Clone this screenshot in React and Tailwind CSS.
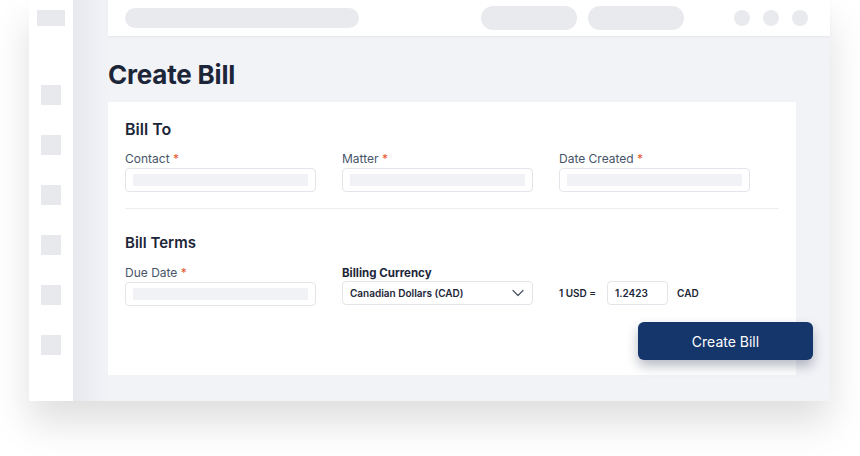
import React from "react";

const Field = ({ label }) => (
    <div className="w-[191px]">
        <div className="text-[12px] leading-[16px] text-[#475569] mb-[1px]">
            {label} <span className="text-[#e4572e]">*</span>
        </div>
        <div className="h-[24px] rounded-[4px] border border-[#e3e5ea] bg-white px-[7px] flex items-center">
            <div className="h-[12px] w-full bg-[#f1f2f5]" />
        </div>
    </div>
);

const App = () => {
    return (
        <div className="w-[860px] h-[456px] bg-white relative overflow-hidden" style={{ fontFamily: "Inter, 'Noto Sans', sans-serif" }}>
            <div className="absolute left-[29px] top-0 w-[801px] h-[401px] flex shadow-[0_22px_36px_rgba(0,0,0,0.13)]">
                {/* sidebar */}
                <div className="w-[44px] bg-white flex flex-col items-center pt-[10px]">
                    <div className="w-[28px] h-[16px] bg-[#e8e9ed]" />
                    <div className="flex flex-col gap-[30px] mt-[59px]">
                        {[0, 1, 2, 3, 4, 5].map((i) => (
                            <div key={i} className="w-[20px] h-[20px] bg-[#e8e9ed]" />
                        ))}
                    </div>
                </div>
                <div className="w-[35px] bg-gradient-to-r from-[#e7e9ee] to-[#f2f3f7]" />
                {/* main */}
                <div className="flex-1 bg-[#f2f3f7] flex flex-col">
                    <div className="h-[36px] bg-white flex items-center shadow-[0_1px_2px_rgba(0,0,0,0.06)] pl-[17px] pr-[22px]">
                        <div className="w-[234px] h-[20px] rounded-full bg-[#e9eaee]" />
                        <div className="flex-1" />
                        <div className="w-[96px] h-[24px] rounded-full bg-[#e9eaee]" />
                        <div className="w-[96px] h-[24px] rounded-full bg-[#e9eaee] ml-[11px]" />
                        <div className="flex gap-[13px] ml-[50px]">
                            <div className="w-[16px] h-[16px] rounded-full bg-[#e9eaee]" />
                            <div className="w-[16px] h-[16px] rounded-full bg-[#e9eaee]" />
                            <div className="w-[16px] h-[16px] rounded-full bg-[#e9eaee]" />
                        </div>
                    </div>
                    <h1 className="text-[26px] leading-[32px] font-bold text-[#1c2638] mt-[23px] tracking-[-0.2px]">Create Bill</h1>
                    <div className="relative mt-[11px] w-[688px] h-[273px] bg-white px-[17px] pt-[17px]">
                        <h2 className="text-[16px] leading-[20px] font-semibold text-[#1c2638]">Bill To</h2>
                        <div className="flex gap-[26px] mt-[12px]">
                            <Field label="Contact" />
                            <Field label="Matter" />
                            <Field label="Date Created" />
                        </div>
                        <div className="h-px bg-[#eceef2] mt-[16px]" />
                        <h2 className="text-[15px] leading-[20px] font-semibold text-[#1c2638] mt-[24px]">Bill Terms</h2>
                        <div className="flex gap-[26px] mt-[12px]">
                            <Field label="Due Date" />
                            <div className="w-[191px]">
                                <div className="text-[11.5px] leading-[16px] font-bold text-[#1c2638]">Billing Currency</div>
                                <div className="h-[24px] rounded-[4px] border border-[#e3e5ea] flex items-center justify-between pl-[7px] pr-[8px]">
                                    <span className="text-[10px] font-semibold text-[#1c2638]">Canadian Dollars (CAD)</span>
                                    <svg width="12" height="8" viewBox="0 0 12 8" fill="none" stroke="#4b5563" strokeWidth="1.2" strokeLinecap="round" strokeLinejoin="round">
                                        <path d="M1 1.5l5 5 5-5" />
                                    </svg>
                                </div>
                            </div>
                            <div className="flex items-end pb-[1px]">
                                <div className="flex items-center h-[24px]">
                                    <span className="text-[10px] font-semibold text-[#1c2638]">1 USD =</span>
                                    <div className="ml-[11px] w-[61px] h-[24px] rounded-[4px] border border-[#e3e5ea] flex items-center pl-[7px] text-[10px] font-semibold text-[#1c2638]">1.2423</div>
                                    <span className="ml-[9px] text-[10px] font-semibold text-[#1c2638]">CAD</span>
                                </div>
                            </div>
                        </div>
                        <button className="absolute left-[530px] top-[220px] w-[175px] h-[38px] rounded-[6px] bg-[#14366b] text-white text-[14px] shadow-[0_6px_12px_rgba(20,30,60,0.3)]">
                            Create Bill
                        </button>
                    </div>
                </div>
            </div>
        </div>
    );
};

export default App;
